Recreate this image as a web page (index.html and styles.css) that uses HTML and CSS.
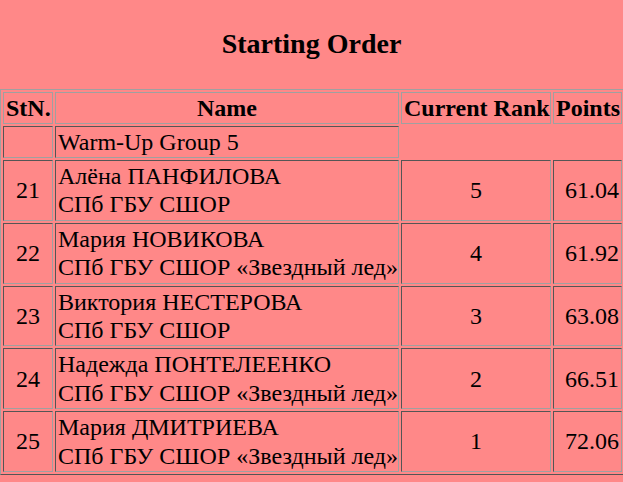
FILE: index.html
```html
<!DOCTYPE html>
<html>
<head>
<meta charset="utf-8">
<title>Starting Order</title>
<link rel="stylesheet" href="styles.css">
</head>
<body>
<h1 class="title">Starting Order</h1>
<table class="order">
  <colgroup>
    <col class="c-no">
    <col class="c-name">
    <col class="c-rank">
    <col class="c-pts">
  </colgroup>
  <thead>
    <tr>
      <th>StN.</th>
      <th>Name</th>
      <th>Current Rank</th>
      <th>Points</th>
    </tr>
  </thead>
  <tbody>
    <tr class="group">
      <td class="no">&nbsp;</td>
      <td class="name">Warm-Up Group 5</td>
      <td class="blank" colspan="2"></td>
    </tr>
    <tr class="entry">
      <td class="no">21</td>
      <td class="name">Алёна ПАНФИЛОВА<br>СПб ГБУ СШОР</td>
      <td class="rank">5</td>
      <td class="pts">61.04</td>
    </tr>
    <tr class="entry">
      <td class="no">22</td>
      <td class="name">Мария НОВИКОВА<br>СПб ГБУ СШОР «Звездный лед»</td>
      <td class="rank">4</td>
      <td class="pts">61.92</td>
    </tr>
    <tr class="entry">
      <td class="no">23</td>
      <td class="name">Виктория НЕСТЕРОВА<br>СПб ГБУ СШОР</td>
      <td class="rank">3</td>
      <td class="pts">63.08</td>
    </tr>
    <tr class="entry">
      <td class="no">24</td>
      <td class="name">Надежда ПОНТЕЛЕЕНКО<br>СПб ГБУ СШОР «Звездный лед»</td>
      <td class="rank">2</td>
      <td class="pts">66.51</td>
    </tr>
    <tr class="entry">
      <td class="no">25</td>
      <td class="name">Мария ДМИТРИЕВА<br>СПб ГБУ СШОР «Звездный лед»</td>
      <td class="rank">1</td>
      <td class="pts">72.06</td>
    </tr>
  </tbody>
</table>
</body>
</html>
```
FILE: styles.css
```css
html {
  overflow: hidden;
  background: #ff8888;
}
body {
  margin: 0;
  background: #ff8888;
  color: #000;
  font-family: "Liberation Serif", "Times New Roman", serif;
  width: 640px;
}
.title {
  width: 623px;
  margin: 28px 0 29px;
  font-size: 28px;
  font-weight: bold;
  text-align: center;
}
.order {
  table-layout: fixed;
  width: 625px;
  border-collapse: separate;
  border-spacing: 2px;
  border-style: solid;
  border-width: 1px;
  border-color: #a0a0a0 #555 #555 #a0a0a0;
  font-size: 24px;
  line-height: 28px;
}
.c-no { width: 50px; }
.c-name { width: 344px; }
.c-rank { width: 150px; }
.c-pts { width: 69px; }
.order th,
.order td {
  padding: 1px 2px;
  box-sizing: border-box;
}
.order th {
  border: 1px solid #a0a0a0;
  font-weight: bold;
  text-align: center;
  white-space: nowrap;
}
.order td {
  border: 1px solid;
  border-color: #555 #a0a0a0 #a0a0a0 #555;
  vertical-align: middle;
}
.order .entry td {
  line-height: 28.4px;
}
.order td.blank {
  border: none;
}
.no { text-align: center; }
.name { text-align: left; white-space: nowrap; }
.rank { text-align: center; }
.pts { text-align: right; }
```
